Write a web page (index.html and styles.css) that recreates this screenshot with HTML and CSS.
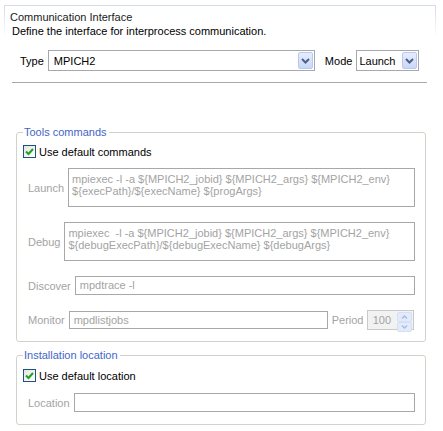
FILE: index.html
```html
<!DOCTYPE html>
<html>
<head>
<meta charset="utf-8">
<link rel="stylesheet" href="styles.css">
</head>
<body>
<div class="head">
  <div class="head-title">Communication Interface</div>
  <div class="head-desc">Define the interface for interprocess communication.</div>
</div>

<div class="type-row">
  <span class="lbl">Type</span>
  <div class="combo combo-type">
    <span class="combo-text">MPICH2</span>
    <span class="combo-btn"><svg width="15" height="17" viewBox="0 0 15 17"><path d="M4 7 L7.5 10.5 L11 7" fill="none" stroke="#4d6185" stroke-width="2"/></svg></span>
  </div>
  <span class="lbl lbl-mode">Mode</span>
  <div class="combo combo-mode">
    <span class="combo-text combo-text-mode">Launch</span>
    <span class="combo-btn"><svg width="15" height="17" viewBox="0 0 15 17"><path d="M4 7 L7.5 10.5 L11 7" fill="none" stroke="#4d6185" stroke-width="2"/></svg></span>
  </div>
</div>

<div class="sep"></div>

<fieldset class="group group-tools">
  <legend>Tools commands</legend>
  <div class="check-row">
    <span class="check"><svg width="11" height="11" viewBox="0 0 11 11"><path d="M2 5.5 L4.5 8 L9 3" fill="none" stroke="#21a121" stroke-width="2"/></svg></span>
    <span class="check-text">Use default commands</span>
  </div>
  <div class="row row-launch">
    <span class="dlbl">Launch</span>
    <div class="field area">mpiexec -l -a ${MPICH2_jobid} ${MPICH2_args} ${MPICH2_env}<br>${execPath}/${execName} ${progArgs}</div>
  </div>
  <div class="row row-debug">
    <span class="dlbl">Debug</span>
    <div class="field area">mpiexec &nbsp;-l -a ${MPICH2_jobid} ${MPICH2_args} ${MPICH2_env}<br>${debugExecPath}/${debugExecName} ${debugArgs}</div>
  </div>
  <div class="row row-discover">
    <span class="dlbl">Discover</span>
    <div class="field line">mpdtrace -l</div>
  </div>
  <div class="row row-monitor">
    <span class="dlbl">Monitor</span>
    <div class="field line line-monitor">mpdlistjobs</div>
    <span class="dlbl lbl-period">Period</span>
    <div class="spin">
      <span class="spin-text">100</span>
      <span class="spin-btns">
        <span class="spin-btn"><svg width="13" height="8" viewBox="0 0 13 8"><path d="M4 5.5 L6.5 3 L9 5.5" fill="none" stroke="#a9bde0" stroke-width="1.5"/></svg></span>
        <span class="spin-btn"><svg width="13" height="8" viewBox="0 0 13 8"><path d="M4 2.5 L6.5 5 L9 2.5" fill="none" stroke="#a9bde0" stroke-width="1.5"/></svg></span>
      </span>
    </div>
  </div>
</fieldset>

<fieldset class="group group-install">
  <legend>Installation location</legend>
  <div class="check-row">
    <span class="check"><svg width="11" height="11" viewBox="0 0 11 11"><path d="M2 5.5 L4.5 8 L9 3" fill="none" stroke="#21a121" stroke-width="2"/></svg></span>
    <span class="check-text">Use default location</span>
  </div>
  <div class="row row-location">
    <span class="dlbl">Location</span>
    <div class="field line"></div>
  </div>
</fieldset>
</body>
</html>
```

FILE: styles.css
```css
html, body {
  margin: 0;
  padding: 0;
  background: #ffffff;
}
body {
  font-family: "Liberation Sans", Arial, sans-serif;
  font-size: 11px;
  color: #000000;
  width: 443px;
  height: 431px;
  overflow: hidden;
}

.head {
  margin: 5px 7px 0 4px;
  padding: 4px 0 0 5px;
  border: 1px solid #d6dde8;
  border-bottom: 0;
  border-image: linear-gradient(to bottom, #d3dbe7 0%, rgba(214, 221, 232, 0) 100%) 1;
}
.head-title {
  line-height: 14px;
  color: #1a1a1a;
}
.head-desc {
  line-height: 14px;
  padding-left: 2px;
}

.type-row {
  display: flex;
  align-items: center;
  margin-top: 12px;
  padding-left: 20px;
  height: 21px;
}
.lbl {
  margin-right: 4px;
}
.lbl-mode {
  margin-left: 10px;
}
.combo {
  display: flex;
  align-items: center;
  justify-content: space-between;
  box-sizing: border-box;
  height: 21px;
  border: 1px solid #a5a9ae;
  background: #ffffff;
  padding: 1px;
}
.combo-type {
  width: 267px;
}
.combo-mode {
  width: 63px;
}
.combo-text {
  padding-left: 4px;
}
.combo-text-mode {
  padding-left: 1px;
}
.combo-btn {
  display: block;
  box-sizing: border-box;
  width: 15px;
  height: 17px;
  border: 1px solid #b9c9ee;
  border-radius: 2px;
  background: linear-gradient(to bottom, #e6edfd 0%, #c9d7f9 100%);
  position: relative;
}
.combo-btn svg {
  position: absolute;
  left: -1px;
  top: -1px;
}

.sep {
  margin: 11px 16px 0 12px;
  height: 1px;
  background: #a8a8a8;
}

.group {
  margin: 0 17px 0 16px;
  padding: 0 10px 0 11px;
  border: 1px solid #d3d3cc;
  border-radius: 3px;
  min-width: 0;
}
.group legend {
  margin-left: -5px;
  padding: 0 2px 0 1px;
  line-height: 13px;
  color: #3f66c6;
}
.group-tools {
  margin-top: 43px;
  padding-bottom: 11px;
}
.group-install {
  margin-top: 7px;
  padding-bottom: 12px;
}

.check-row {
  display: flex;
  align-items: center;
  margin-left: -5px;
  margin-top: 6px;
  height: 13px;
}
.group-install .check-row {
  margin-top: 7px;
}
.check {
  box-sizing: border-box;
  width: 13px;
  height: 13px;
  border: 1px solid #1c5180;
  background: linear-gradient(to bottom right, #e4e4df, #ffffff);
  display: flex;
  align-items: center;
  justify-content: center;
}
.check svg {
  display: block;
}
.check-text {
  margin-left: 3px;
}

.row {
  display: flex;
  align-items: center;
}
.row-launch {
  margin-top: 10px;
}
.row-debug,
.row-discover,
.row-monitor {
  margin-top: 15px;
}
.row-location {
  margin-top: 11px;
}
.dlbl {
  color: #a3a3a3;
  margin-right: 4px;
  white-space: nowrap;
}
.field {
  flex: 1;
  box-sizing: border-box;
  border: 1px solid #a8a8a8;
  background: #ffffff;
  color: #a3a3a3;
  white-space: nowrap;
  overflow: hidden;
}
.area {
  height: 39px;
  padding: 4px 0 0 3px;
  line-height: 12px;
}
.line {
  height: 19px;
  line-height: 17px;
  padding-left: 4px;
}
.line-monitor {
  flex: 0 0 259px;
  height: 18px;
  line-height: 16px;
}
.lbl-period {
  margin-left: 4px;
  margin-right: 0;
  width: 35px;
}
.spin {
  box-sizing: border-box;
  width: 47px;
  height: 20px;
  border: 1px solid #c9c9c9;
  background: #f2f2f2;
  display: flex;
  align-items: stretch;
  justify-content: space-between;
  padding: 1px;
}
.spin-text {
  color: #a3a3a3;
  line-height: 16px;
  padding-left: 4px;
}
.spin-btns {
  display: flex;
  flex-direction: column;
  width: 15px;
}
.spin-btn {
  flex: 1;
  box-sizing: border-box;
  border: 1px solid #d4e0f6;
  border-radius: 2px;
  background: #e3ebfa;
  display: flex;
  align-items: center;
  justify-content: center;
}
.spin-btn svg {
  display: block;
}
```
